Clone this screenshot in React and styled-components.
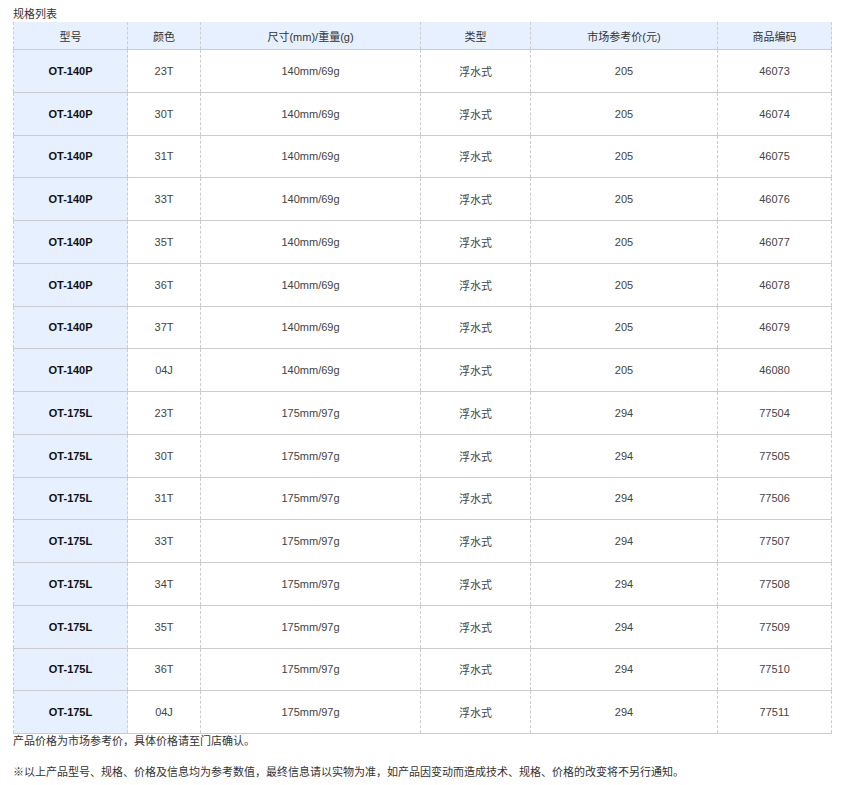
import React from "react";
import styled, { createGlobalStyle } from "styled-components";

const G = createGlobalStyle`
  body { margin: 0; background: #fff; font-family: "Liberation Sans", Arial, "Noto Sans CJK SC", sans-serif; color: #333; }
`;
const Wrap = styled.div` padding: 7px 22px 0 13px; font-size: 11px; `;
const Title = styled.div` line-height: 15px; color: #333; `;
const Table = styled.table`
  width: 818px; border-collapse: collapse; table-layout: fixed; font-size: 11px;
  border-left: 1px dashed #ccc; border-right: 1px dashed #ccc;
`;
const Th = styled.th`
  background: #e6f0fe; font-weight: normal; height: 27px; padding: 0; color: #333;
  border-right: 1px dashed #ccc; border-bottom: 1px solid #ccc;
`;
const Td = styled.td`
  height: 41.75px; padding: 0; text-align: center;
  background: ${p => (p.$first ? "#e6f0fe" : "#fff")};
  font-weight: ${p => (p.$first ? "bold" : "normal")};
  color: ${p => (p.$first ? "#111" : "#444")};
  border-right: 1px dashed #ccc; border-bottom: 1px solid #ccc;
`;
const Note = styled.div` line-height: 15px; color: #333; margin-top: ${p => p.$mt}px; `;

const widths = [114, 73, 220, 110, 187, 114];
const heads = ["型号", "颜色", "尺寸(mm)/重量(g)", "类型", "市场参考价(元)", "商品编码"];
const rows = [
  ...["23T","30T","31T","33T","35T","36T","37T","04J"].map((c, i) => ["OT-140P", c, "140mm/69g", "浮水式", "205", String(46073 + i)]),
  ...["23T","30T","31T","33T","34T","35T","36T","04J"].map((c, i) => ["OT-175L", c, "175mm/97g", "浮水式", "294", String(77504 + i)]),
];

export default function App() {
  return (
    <Wrap>
      <G />
      <Title>规格列表</Title>
      <Table>
        <colgroup>{widths.map((w, i) => <col key={i} style={{ width: w }} />)}</colgroup>
        <thead><tr>{heads.map(h => <Th key={h}>{h}</Th>)}</tr></thead>
        <tbody>
          {rows.map((r, i) => (
            <tr key={i}>{r.map((c, j) => <Td key={j} $first={j === 0}>{c}</Td>)}</tr>
          ))}
        </tbody>
      </Table>
      <Note $mt={0}>产品价格为市场参考价，具体价格请至门店确认。</Note>
      <Note $mt={16}>※以上产品型号、规格、价格及信息均为参考数值，最终信息请以实物为准，如产品因变动而造成技术、规格、价格的改变将不另行通知。</Note>
    </Wrap>
  );
}
